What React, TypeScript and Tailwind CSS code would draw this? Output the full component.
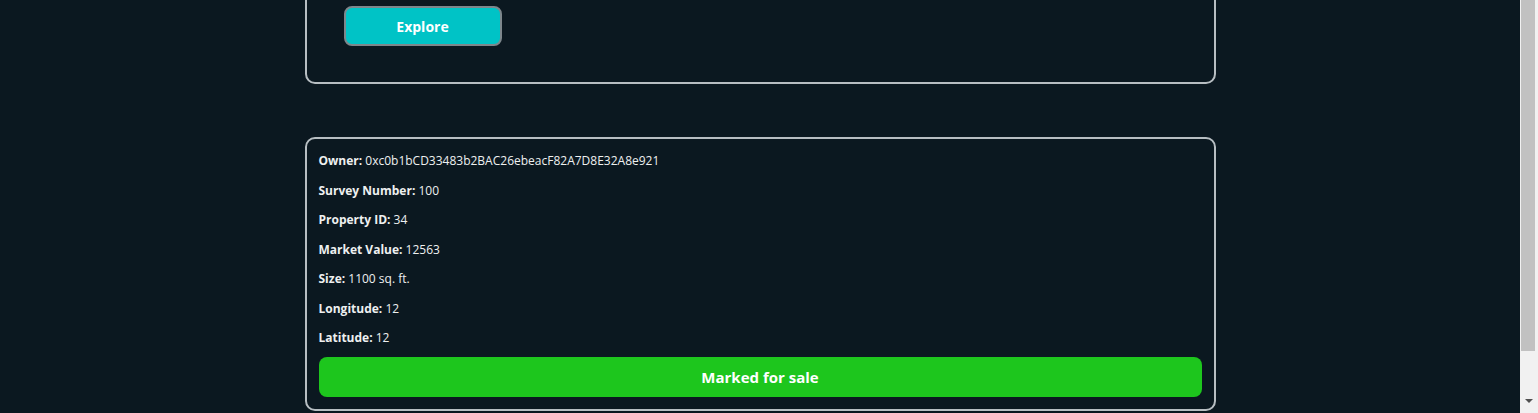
import React from "react";

const fields: [string, string][] = [
  ["Owner", "0xc0b1bCD33483b2BAC26ebeacF82A7D8E32A8e921"],
  ["Survey Number", "100"],
  ["Property ID", "34"],
  ["Market Value", "12563"],
  ["Size", "1100 sq. ft."],
  ["Longitude", "12"],
  ["Latitude", "12"],
];

export default function App() {
  return (
    <div className="flex h-[413px] w-full overflow-hidden bg-[#0b1820]" style={{ fontFamily: '"Open Sans", "Noto Sans", sans-serif' }}>
      <div className="flex-1 overflow-hidden">
        <div className="mx-auto w-[911px]">
          {/* property card (scrolled, top cut off) */}
          <div className="-mt-[68px] rounded-[10px] border-2 border-[#b7bec2] pl-[37px] pt-[72px] pb-[36px]">
            <button className="h-[40px] w-[158px] rounded-[8px] border-2 border-[#7d878c] bg-[#00c3c6] text-[14px] font-bold text-white">
              Explore
            </button>
          </div>

          {/* details card */}
          <div className="mt-[53px] rounded-[10px] border-2 border-[#b7bec2] px-3 pt-[13px] pb-3">
            <div className="flex flex-col gap-[11.5px] text-[12px] leading-[18px] text-[#eef0f0]">
              {fields.map(([k, v]) => (
                <p key={k}>
                  <span className="font-bold">{k}:</span> {v}
                </p>
              ))}
            </div>
            <button className="mt-[10px] h-[40px] w-full rounded-[8px] bg-[#1dc61d] text-[15px] font-bold text-white">
              Marked for sale
            </button>
          </div>
        </div>
      </div>

      {/* scrollbar */}
      <div className="flex w-[18px] flex-col bg-[#f1f1f1]">
        <div className="ml-[1px] h-[351px] w-[14px] bg-[#c1c1c1]" />
        <div className="flex flex-1 items-end justify-center pb-[9px]">
          <svg width="8" height="5" viewBox="0 0 8 5">
            <path d="M0 0 L8 0 L4 4 Z" fill="#505050" />
          </svg>
        </div>
      </div>
    </div>
  );
}
